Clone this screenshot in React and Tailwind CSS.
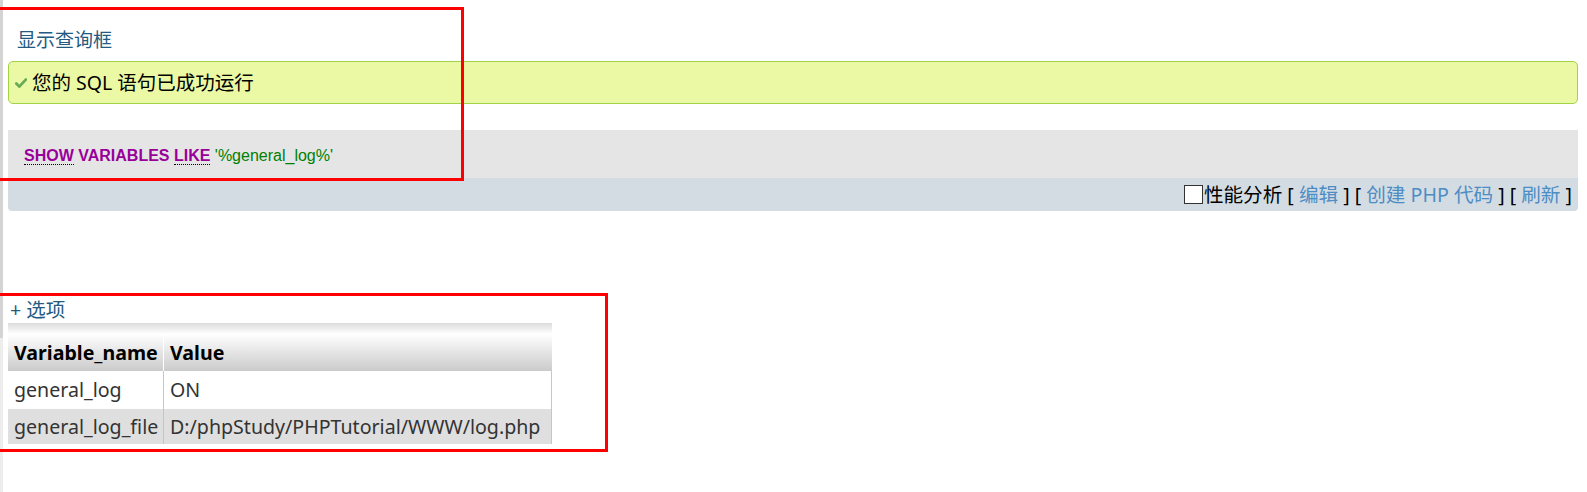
import React from "react";

function CheckMark() {
  return (
    <svg width="12" height="10" viewBox="0 0 12 10" className="shrink-0">
      <path
        d="M1.3 5.6 L4.3 8.6 L10.8 1.6"
        stroke="#6aab57"
        strokeWidth="2.8"
        fill="none"
        strokeLinecap="round"
        strokeLinejoin="round"
      />
    </svg>
  );
}

function App() {
  const rows = [
    { name: "general_log", value: "ON", bg: "bg-white" },
    { name: "general_log_file", value: "D:/phpStudy/PHPTutorial/WWW/log.php", bg: "bg-[#dfdfdf]" },
  ];

  return (
    <div className="relative flex h-[492px] w-full overflow-hidden bg-white font-['Noto_Sans','Noto_Sans_CJK_SC',sans-serif]">
      {/* left frame edge */}
      <div className="flex w-[3px] flex-col">
        <div className="h-[338px] bg-[#d4d4d4]" />
        <div className="flex-1 bg-[#ededed]" />
      </div>

      <div className="flex-1 pl-[5px] pr-[9px]">
        {/* show query box link */}
        <div className="pt-[27px] pl-[9px] text-[19px] leading-[26px] text-[#235a81]">显示查询框</div>

        {/* success message */}
        <div className="mt-[8px] flex h-[43px] items-center rounded-[5px] border border-[#a2d246] bg-[#ebf8a4] pl-[6px]">
          <CheckMark />
          <span className="ml-[5px] text-[19.5px] leading-[26px] text-black">您的 SQL 语句已成功运行</span>
        </div>

        {/* sql */}
        <div className="mt-[26px] flex h-[48px] items-center bg-[#e5e5e5] pl-[16px] pt-[3px] font-['Liberation_Sans',Arial,sans-serif] text-[16px]">
          <span className="border-b border-dotted border-black font-bold leading-[17px] text-[#990099]">SHOW</span>
          <span className="font-bold text-[#990099]">&nbsp;VARIABLES&nbsp;</span>
          <span className="border-b border-dotted border-black font-bold leading-[17px] text-[#990099]">LIKE</span>
          <span className="text-[#008000]">&nbsp;'%general_log%'</span>
        </div>

        {/* toolbar */}
        <div className="flex h-[33px] items-center justify-end rounded-b-[4px] bg-[#d3dce3] pr-[6px] text-[19.6px] leading-[26px] text-black">
          <span className="mr-[1px] h-[19px] w-[19px] border border-[#333] bg-white" />
          <span className="whitespace-pre">
            性能分析 [ <span className="text-[#4d8dc4]">编辑</span> ] [ <span className="text-[#4d8dc4]">创建 PHP 代码</span> ] [ <span className="text-[#4d8dc4]">刷新</span> ]
          </span>
        </div>

        {/* options link */}
        <div className="mt-[86px] pl-[2px] text-[19.5px] leading-[26px] text-[#235a81]">+ 选项</div>

        {/* result table */}
        <div className="w-[544px] text-[19.6px]">
          <div className="h-[11px] bg-gradient-to-b from-[#dcdcdc] to-white" />
          <div className="flex h-[37px] items-center bg-gradient-to-b from-white to-[#cbcbcb] font-bold text-black">
            <div className="flex h-full w-[156px] items-center border-r border-white pl-[6px]">Variable_name</div>
            <div className="flex h-full flex-1 items-center pl-[6px]">Value</div>
          </div>
          {rows.map((r, i) => (
            <div
              key={r.name}
              className={`flex ${i === 0 ? "h-[38px]" : "h-[35px]"} items-center border-r border-[#c6c6c6] ${r.bg} text-[#333]`}
            >
              <div className="flex h-full w-[156px] items-center border-r border-[#c6c6c6] pl-[6px]">{r.name}</div>
              <div className="flex h-full flex-1 items-center pl-[6px]">{r.value}</div>
            </div>
          ))}
        </div>
      </div>

      {/* red annotation boxes */}
      <div className="absolute left-[-3px] top-[7px] h-[174px] w-[467px] border-[3px] border-[#ff0000]" />
      <div className="absolute left-[-3px] top-[293px] h-[159px] w-[611px] border-[3px] border-[#ff0000]" />
    </div>
  );
}

export default App;
